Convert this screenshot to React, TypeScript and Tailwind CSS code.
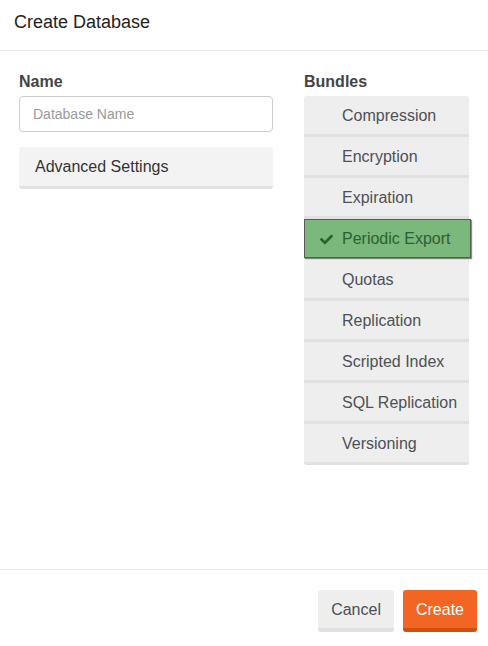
import React from "react";
import { FaCheck } from "react-icons/fa";

const bundles = [
  "Compression",
  "Encryption",
  "Expiration",
  "Periodic Export",
  "Quotas",
  "Replication",
  "Scripted Index",
  "SQL Replication",
  "Versioning",
];

export default function App() {
  return (
    <div
      className="w-[488px] h-[646px] bg-white flex flex-col"
      style={{ fontFamily: '"Liberation Sans", Arial, sans-serif' }}
    >
      <div className="h-[51px] border-b border-[#e5e5e5] pt-[11px] pl-[14px]">
        <h1 className="text-[18px] leading-[22px] text-[#222222]">Create Database</h1>
      </div>
      <div className="h-[518px] px-[19px] pt-[21px] flex gap-[31px]">
        <div className="w-[254px] flex flex-col">
          <label className="text-[16px] leading-[20px] font-bold text-[#444444] mb-[4px]">Name</label>
          <input
            className="h-[36px] w-full border border-[#cccccc] rounded-[4px] px-[13px] text-[14px] text-[#555] placeholder:text-[#999999] outline-none"
            placeholder="Database Name"
          />
          <div className="mt-[15px] h-[42px] rounded-[3px] bg-[#f3f3f3] border-b-[3px] border-[#e2e2e2] flex items-center pl-[16px] pt-[1px] text-[16px] text-[#333333]">
            Advanced Settings
          </div>
        </div>
        <div className="w-[165px] flex flex-col">
          <div className="text-[16px] leading-[20px] font-bold text-[#444444] mb-[4px]">Bundles</div>
          <div className="flex flex-col rounded-[3px]">
            {bundles.map((b, i) =>
              b === "Periodic Export" ? (
                <div key={b} className="h-[41px] pb-[3px] bg-[#eeeeee] relative">
                  <div className="absolute left-0 top-0 w-[167px] h-[39px] bg-[#7ab87c] border border-[#555d55] shadow-[1px_1px_1px_rgba(0,0,0,0.45)] flex items-center pl-[15px] pt-[1px] text-[16px] text-[#2d602f]">
                    <FaCheck className="w-[13px] h-[13px] mr-[9px]" />
                    {b}
                  </div>
                </div>
              ) : (
                <div
                  key={b}
                  className={`h-[41px] bg-[#eeeeee] border-b-[3px] border-[#e1e1e1] flex items-center pl-[38px] pt-[1px] text-[16px] text-[#4d5156] ${
                    i === 0 ? "rounded-t-[3px]" : ""
                  } ${i === bundles.length - 1 ? "rounded-b-[3px]" : ""}`}
                >
                  {b}
                </div>
              )
            )}
          </div>
        </div>
      </div>
      <div className="flex-1 border-t border-[#e5e5e5] flex justify-end items-start pt-[20px] pr-[11px] gap-[9px]">
        <button className="h-[42px] px-[13px] pt-[1px] bg-[#eeeeee] border-b-[4px] border-[#e0e0e0] rounded-[3px] text-[16px] text-[#4a4f55]">
          Cancel
        </button>
        <button className="h-[42px] px-[13px] pt-[1px] bg-[#f26522] border-b-[4px] border-[#d0500f] rounded-[3px] text-[16px] text-white">
          Create
        </button>
      </div>
    </div>
  );
}
